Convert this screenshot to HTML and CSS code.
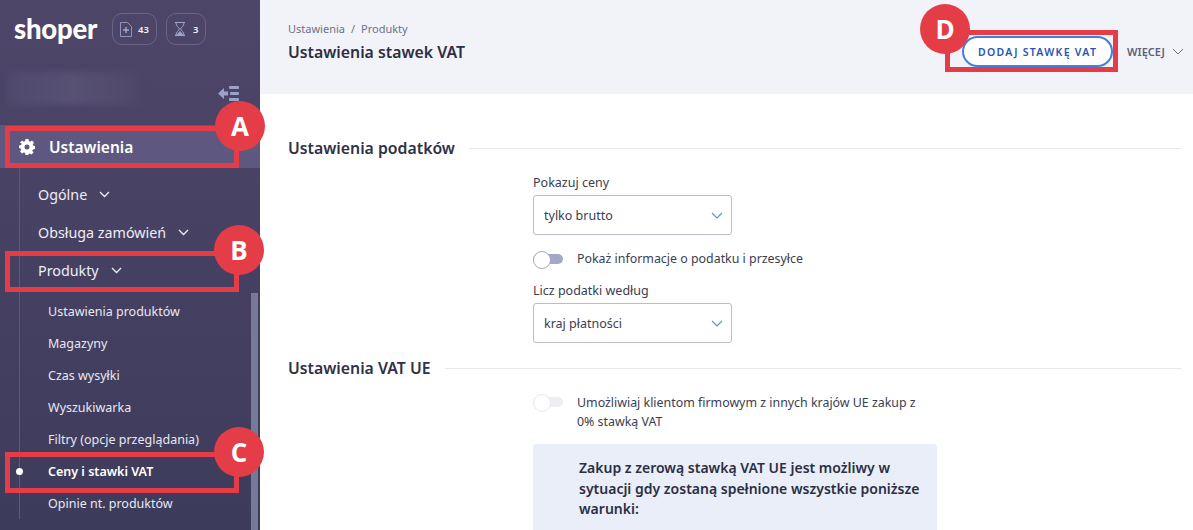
FILE: index.html
```html
<!DOCTYPE html>
<html lang="pl">
  <head>
    <meta charset="UTF-8" />
    <meta name="viewport" content="width=device-width" />
    <title>Ustawienia stawek VAT</title>
    <link rel="stylesheet" href="styles.css">
  </head>
  <body>
    <div class="layout">
      <aside class="sidebar">
        <div class="brand">
          <span class="logo">shoper</span>
          <span class="counter counter-orders">
            <svg width="12" height="15" viewBox="0 0 12 15" fill="none" stroke="#8f92bd"><path d="M.5.5h7l4 4v10H.5z" /><path d="M6 5v6M3 8h6" stroke="#c5c7e0" /></svg>
            43
          </span>
          <span class="counter counter-wait">
            <svg width="12" height="14" viewBox="0 0 12 14" fill="none" stroke="#a0a3ca"><path d="M1 .5h10M1 13.5h10M2 1c0 3 3 4.500 3.500 6C5 8.500 2 10 2 13M10 1c0 3-3 4.500-3.500 6 .5 1.500 3.500 3 3.500 6" /><path d="M3 13l3-3.500L9 13z" fill="#a0a3ca" /></svg>
            3
          </span>
        </div>
        <div class="shop-row">
          <div class="shop-blur"></div>
          <svg class="collapse" width="22" height="17" viewBox="0 0 22 17" fill="#9da0c8"><path d="M0 8.500 6 3v3.500h4v4H6V14z" /><rect x="11" y="1" width="10" height="3" rx="1" /><rect x="12" y="7" width="9" height="3" rx="1" /><rect x="11" y="13" width="10" height="3" rx="1" /></svg>
        </div>
        <div class="section-active">
          <svg width="16" height="16" viewBox="0 0 16 16"><path fill="#fff" fill-rule="evenodd" d="M6.500 0h3l.4 2.100 1.300.6L13 1.500l2 2.100-1.200 1.800.6 1.300 1.600.4v2.900l-2.100.4-.6 1.300 1.200 1.800-2 2.100-1.800-1.200-1.300.5L9.500 16h-3l-.4-2.100-1.300-.5L3 14.600l-2-2.100 1.200-1.800-.6-1.300L0 9V6.500l2.100-.4.600-1.300L1 3.600l2-2.100 1.800 1.200 1.300-.6zM8 5.500a2.500 2.500 0 1 0 0 5 2.500 2.500 0 0 0 0-5z" /></svg>
          <span>Ustawienia</span>
        </div>
        <nav class="menu">
          <a class="menu-group">Ogólne <svg class="caret" width="11" height="7" viewBox="0 0 11 7"><path d="M1 1l4.500 4.500L10 1" /></svg></a>
          <a class="menu-group">Obsługa zamówień <svg class="caret" width="11" height="7" viewBox="0 0 11 7"><path d="M1 1l4.500 4.500L10 1" /></svg></a>
          <a class="menu-group">Produkty <svg class="caret" width="11" height="7" viewBox="0 0 11 7"><path d="M1 1l4.500 4.500L10 1" /></svg></a>
          <div class="submenu">
            <a>Ustawienia produktów</a>
            <a>Magazyny</a>
            <a>Czas wysyłki</a>
            <a>Wyszukiwarka</a>
            <a>Filtry (opcje przeglądania)</a>
            <a class="current">Ceny i stawki VAT</a>
            <a>Opinie nt. produktów</a>
          </div>
        </nav>
        <div class="scrollbar"></div>
      </aside>

      <main class="main">
        <header class="topbar">
          <div>
            <div class="crumbs">Ustawienia<span class="crumb-sep">/</span>Produkty</div>
            <h1>Ustawienia stawek VAT</h1>
          </div>
          <div class="actions">
            <button class="btn-add">DODAJ STAWKĘ VAT</button>
            <span class="more">WIĘCEJ <svg width="12" height="7" viewBox="0 0 12 7" fill="none" stroke="#6d7087"><path d="M1 1l5 5 5-5" /></svg></span>
          </div>
        </header>

        <div class="content">
          <div class="section-title"><h2>Ustawienia podatków</h2></div>
          <div class="form-col">
            <label class="field-label">Pokazuj ceny</label>
            <div class="select">tylko brutto <svg width="12" height="7" viewBox="0 0 12 7"><path d="M1 1l5 5 5-5" /></svg></div>
            <div class="toggle-row">
              <span class="toggle"></span>
              <span>Pokaż informacje o podatku i przesyłce</span>
            </div>
            <label class="field-label">Licz podatki według</label>
            <div class="select">kraj płatności <svg width="12" height="7" viewBox="0 0 12 7"><path d="M1 1l5 5 5-5" /></svg></div>
          </div>

          <div class="section-title section-vat"><h2>Ustawienia VAT UE</h2></div>
          <div class="form-col form-wide">
            <div class="toggle-row toggle-row-off">
              <span class="toggle toggle-off"></span>
              <span>Umożliwiaj klientom firmowym z innych krajów UE zakup z 0% stawką VAT</span>
            </div>
            <div class="notice">Zakup z zerową stawką VAT UE jest możliwy w sytuacji gdy zostaną spełnione wszystkie poniższe warunki:</div>
          </div>
        </div>
      </main>
    </div>

    <!-- tutorial markers drawn over the screenshot -->
    <div class="mark mark-a"></div>
    <div class="mark mark-b"></div>
    <div class="mark mark-c"></div>
    <div class="mark mark-d"></div>
    <div class="badge badge-a">A</div>
    <div class="badge badge-b">B</div>
    <div class="badge badge-c">C</div>
    <div class="badge badge-d">D</div>
  </body>
</html>
```

FILE: styles.css
```css
* {
  box-sizing: border-box;
}

html,
body {
  height: 100%;
}

body {
  margin: 0;
  overflow: hidden;
  font-family: "Noto Sans", "Open Sans", sans-serif;
  color: #2f3147;
  background-color: white;
}

.layout {
  display: flex;
  height: 530px;
}

/* sidebar */
.sidebar {
  position: relative;
  flex: 0 0 260px;
  overflow: hidden;
  background: linear-gradient(#4e4669, #3d3b5b);
  color: #f0f0f6;
}

.brand {
  display: flex;
  align-items: center;
  height: 58px;
  padding-left: 14px;
}

.logo {
  width: 98px;
  margin-top: -2px;
  font-family: "Lato", sans-serif;
  font-size: 27.500px;
  font-weight: 900;
  letter-spacing: -0.2px;
  color: white;
}

.counter {
  display: flex;
  align-items: center;
  height: 32px;
  margin-right: 9px;
  border: 1px solid #6a6485;
  border-radius: 10px;
  font-size: 9.500px;
  font-weight: 600;
}

.counter-orders {
  width: 45px;
  gap: 6px;
  padding-left: 7px;
}

.counter-wait {
  width: 40px;
  gap: 7px;
  padding-left: 7px;
}

.shop-row {
  position: relative;
  height: 67px;
}

.shop-blur {
  position: absolute;
  left: 7px;
  top: 14px;
  width: 133px;
  height: 33px;
  background: linear-gradient(90deg, #4f4a6d, #575174 50%, #4e4769);
  filter: blur(3px);
}

.collapse {
  position: absolute;
  left: 218px;
  top: 27px;
}

.section-active {
  display: flex;
  align-items: center;
  gap: 14px;
  height: 43px;
  padding-left: 19px;
  background-color: #5e5880;
  font-size: 15.500px;
  font-weight: 600;
  color: white;
}

.menu {
  position: relative;
  margin-left: 19px;
  padding-top: 7px;
  border-left: 1px solid #5c5a7a;
}

.menu-group {
  display: flex;
  align-items: center;
  gap: 12px;
  height: 38px;
  padding-left: 18px;
  font-size: 14.300px;
  color: #eeeef5;
}

.caret {
  fill: none;
  stroke: #eeeef5;
  stroke-width: 1.300;
}

.submenu {
  padding-top: 6px;
}

.submenu a {
  position: relative;
  display: flex;
  align-items: center;
  height: 32px;
  padding-left: 28px;
  font-size: 12.500px;
  color: #e8e8f2;
}

.submenu .current {
  font-weight: 600;
  color: white;
}

.submenu .current::before {
  content: "";
  position: absolute;
  left: -4px;
  top: 13px;
  width: 7px;
  height: 7px;
  border-radius: 50%;
  background-color: white;
}

.scrollbar {
  position: absolute;
  left: 251px;
  top: 293px;
  width: 7px;
  bottom: 0;
  background-color: #767a98;
}

/* main */
.main {
  flex: 1;
  min-width: 0;
}

.topbar {
  display: flex;
  justify-content: space-between;
  height: 94px;
  padding: 21px 9px 0 28px;
  background-color: #f2f3f8;
}

.crumbs {
  font-size: 11px;
  line-height: 16px;
  color: #6e7088;
}

.crumb-sep {
  margin: 0 6px;
}

h1 {
  margin: 3px 0 0;
  font-size: 15.800px;
  line-height: 24px;
  font-weight: 600;
  color: #2c2e44;
}

.actions {
  display: flex;
  align-items: center;
  align-self: flex-start;
  gap: 14px;
  margin-top: 15px;
}

.btn-add {
  width: 151px;
  height: 31px;
  padding: 0;
  border: 2px solid #3f80e4;
  border-radius: 16px;
  background-color: white;
  font-family: inherit;
  font-size: 10.500px;
  font-weight: 600;
  letter-spacing: 1.300px;
  color: #2a55b5;
}

.more {
  display: flex;
  align-items: center;
  gap: 7px;
  font-size: 11px;
  font-weight: 600;
  color: #5d5f78;
}

.content {
  padding: 42px 11px 0 28px;
}

.section-title {
  display: flex;
  align-items: center;
  gap: 14px;
  height: 24px;
}

.section-title::after {
  content: "";
  flex: 1;
  height: 1px;
  background-color: #e8e9ee;
}

h2 {
  margin: 0;
  font-size: 15.800px;
  font-weight: 600;
  color: #2f3147;
}

.section-vat {
  margin-top: 13px;
}

.form-col {
  width: 199px;
  margin-left: 245px;
  padding-top: 13px;
}

.form-wide {
  width: 404px;
}

.field-label {
  display: block;
  font-size: 12.500px;
  line-height: 20px;
  color: #3b3d52;
}

.select {
  display: flex;
  align-items: center;
  justify-content: space-between;
  height: 40px;
  margin-top: 2px;
  padding: 0 8px 0 10px;
  border: 1px solid #b9bccd;
  border-radius: 3px;
  font-size: 12.500px;
  color: #3b3d52;
}

.select svg {
  fill: none;
  stroke: #5b93e0;
  stroke-width: 1.200;
}

.toggle-row {
  display: flex;
  gap: 14px;
  width: 404px;
  margin: 14px 0 12px;
  font-size: 12.400px;
  line-height: 20px;
  color: #3b3d52;
}

.toggle-row-off {
  margin: 0 0 13px;
  padding-right: 14px;
  line-height: 19px;
}

.toggle {
  position: relative;
  flex: 0 0 30px;
  height: 10px;
  margin-top: 5px;
  border-radius: 5px;
  background-color: #a3a8c9;
}

.toggle::before {
  content: "";
  position: absolute;
  left: 0;
  top: -3px;
  width: 16px;
  height: 16px;
  border: 1px solid #a3a8c9;
  border-radius: 50%;
  background-color: white;
}

.toggle-off {
  margin-top: 4px;
  background-color: #eeeff3;
}

.toggle-off::before {
  border-color: #e6e7ec;
}

.notice {
  height: 86px;
  padding: 14px 14px 0 46px;
  border-radius: 3px 3px 0 0;
  background-color: #e9eef9;
  font-size: 14px;
  line-height: 20.500px;
  font-weight: 600;
  color: #2c2e44;
}

/* markers */
.mark {
  position: absolute;
  border: 5px solid #e43d47;
}

.mark-a {
  left: 5px;
  top: 126px;
  width: 234px;
  height: 42px;
}

.mark-b {
  left: 5px;
  top: 251px;
  width: 234px;
  height: 41px;
}

.mark-c {
  left: 5px;
  top: 452px;
  width: 234px;
  height: 41px;
}

.mark-d {
  left: 945px;
  top: 30px;
  width: 173px;
  height: 42px;
}

.badge {
  position: absolute;
  width: 50px;
  height: 50px;
  border-radius: 50%;
  background-color: #e43d47;
  font-family: "Open Sans", sans-serif;
  font-size: 26px;
  line-height: 50px;
  font-weight: 700;
  text-align: center;
  color: white;
}

.badge-a {
  left: 215px;
  top: 101px;
}

.badge-b {
  left: 214px;
  top: 225px;
}

.badge-c {
  left: 214px;
  top: 427px;
}

.badge-d {
  left: 920px;
  top: 4px;
}
```
